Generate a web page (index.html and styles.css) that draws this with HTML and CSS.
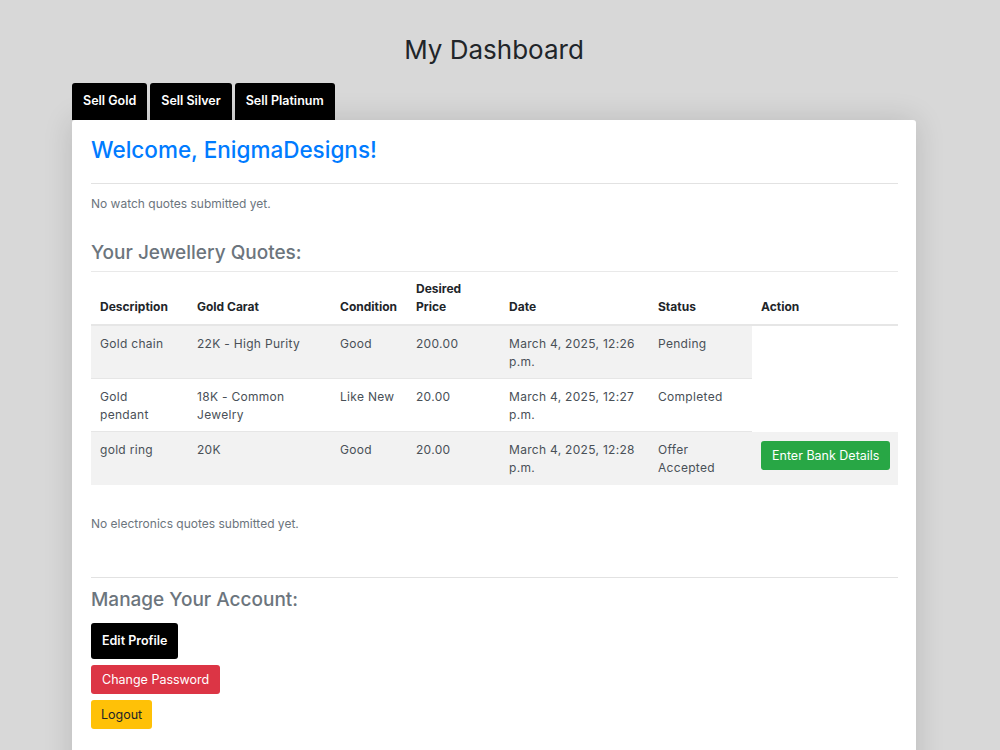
FILE: index.html
```html
<!DOCTYPE html>
<html>
<head>
<title>My Dashboard</title>
<link rel="stylesheet" href="styles.css">
</head>
<body>
  <div class="page">
    <h1 class="page-title">My Dashboard</h1>

    <div class="tabs">
      <a class="tab" href="#">Sell Gold</a>
      <a class="tab" href="#">Sell Silver</a>
      <a class="tab" href="#">Sell Platinum</a>
    </div>

    <div class="card">
      <h2 class="welcome">Welcome, EnigmaDesigns!</h2>
      <hr class="rule">
      <p class="empty">No watch quotes submitted yet.</p>

      <h3 class="section-title">Your Jewellery Quotes:</h3>
      <table class="quotes">
        <colgroup>
          <col style="width:97px">
          <col style="width:143px">
          <col style="width:76px">
          <col style="width:93px">
          <col style="width:149px">
          <col style="width:103px">
          <col>
        </colgroup>
        <thead>
          <tr>
            <th>Description</th>
            <th>Gold Carat</th>
            <th>Condition</th>
            <th>Desired Price</th>
            <th>Date</th>
            <th>Status</th>
            <th>Action</th>
          </tr>
        </thead>
        <tbody>
          <tr>
            <td>Gold chain</td>
            <td>22K - High Purity</td>
            <td>Good</td>
            <td>200.00</td>
            <td>March 4, 2025, 12:26 p.m.</td>
            <td>Pending</td>
          </tr>
          <tr>
            <td>Gold pendant</td>
            <td>18K - Common Jewelry</td>
            <td>Like New</td>
            <td>20.00</td>
            <td>March 4, 2025, 12:27 p.m.</td>
            <td>Completed</td>
          </tr>
          <tr>
            <td>gold ring</td>
            <td>20K</td>
            <td>Good</td>
            <td>20.00</td>
            <td>March 4, 2025, 12:28 p.m.</td>
            <td>Offer Accepted</td>
            <td><a class="btn btn-success" href="#">Enter Bank Details</a></td>
          </tr>
        </tbody>
      </table>

      <p class="empty empty-electronics">No electronics quotes submitted yet.</p>

      <hr class="rule rule-account">
      <h3 class="section-title account-title">Manage Your Account:</h3>
      <div class="account-actions">
        <a class="btn btn-dark" href="#">Edit Profile</a>
        <a class="btn btn-danger" href="#">Change Password</a>
        <a class="btn btn-warning" href="#">Logout</a>
      </div>
    </div>
  </div>
</body>
</html>
```

FILE: styles.css
```css
body {
  margin: 0;
  background: #d8d8d8;
  font-family: 'Inter', 'Open Sans', sans-serif;
  color: #212529;
}

.page {
  width: 844px;
  margin-left: 72px;
  padding-top: 33px;
}

.page-title {
  margin: 0 0 16px;
  text-align: center;
  font-size: 26px;
  font-weight: 400;
  line-height: 34px;
  color: #212529;
}

/* top tabs */
.tabs {
  display: flex;
  gap: 3px;
}

.tab {
  display: block;
  height: 37px;
  line-height: 36px;
  padding: 0 11px;
  background: #000;
  color: #fff;
  font-size: 12.5px;
  font-weight: 600;
  text-decoration: none;
  border-radius: 3px 3px 0 0;
}

.card {
  background: #fff;
  border-radius: 3px;
  padding: 16px 18px 40px 19px;
  box-shadow: 0 0 30px rgba(0, 0, 0, 0.14);
  min-height: 700px;
}

.welcome {
  margin: 0;
  font-size: 22.5px;
  font-weight: 500;
  line-height: 28px;
  color: #007bff;
}

.rule {
  border: none;
  border-top: 1.5px solid #e2e2e2;
  margin: 19px 0 0;
}

.empty {
  margin: 12px 0 0;
  font-size: 12px;
  line-height: 16px;
  color: #6c757d;
}

.section-title {
  margin: 29px 0 0;
  padding-bottom: 6px;
  border-bottom: 1px solid #e9e9e9;
  font-size: 19px;
  font-weight: 500;
  line-height: 24px;
  color: #6c757d;
}

/* quotes table */
.quotes {
  width: 100%;
  border-collapse: collapse;
  table-layout: fixed;
  font-size: 12px;
  line-height: 18px;
}

.quotes th {
  text-align: left;
  vertical-align: bottom;
  font-weight: 700;
  color: #212529;
  padding: 8px 9px 8px;
  border-bottom: 2px solid #e6e6e6;
}

.quotes td {
  vertical-align: top;
  padding: 9px 9px 7px;
  color: #495057;
  letter-spacing: 0.3px;
  border-bottom: 1px solid #e6e6e6;
}

.quotes tbody tr:last-child td {
  border-bottom: none;
  padding-bottom: 8px;
}

.quotes tbody tr:nth-child(odd) td {
  background: #f2f2f2;
}

/* buttons */
.btn {
  display: inline-block;
  padding: 0 11px;
  height: 29px;
  line-height: 29px;
  font-size: 12.5px;
  letter-spacing: 0;
  color: #fff;
  text-decoration: none;
  border-radius: 3px;
  white-space: nowrap;
}

.btn-success {
  background: #28a745;
}

.btn-dark {
  background: #000;
  font-weight: 600;
  height: 36px;
  line-height: 36px;
  padding: 0 11px;
}

.btn-danger {
  background: #dc3545;
}

.btn-warning {
  background: #ffc107;
  color: #212529;
  padding: 0 10px;
}

.empty-electronics {
  margin-top: 31px;
}

.rule-account {
  margin-top: 45px;
}

.account-title {
  margin-top: 10px;
  border-bottom: none;
  padding-bottom: 0;
}

.account-actions {
  display: flex;
  flex-direction: column;
  align-items: flex-start;
  gap: 6px;
  margin-top: 11px;
}
```
